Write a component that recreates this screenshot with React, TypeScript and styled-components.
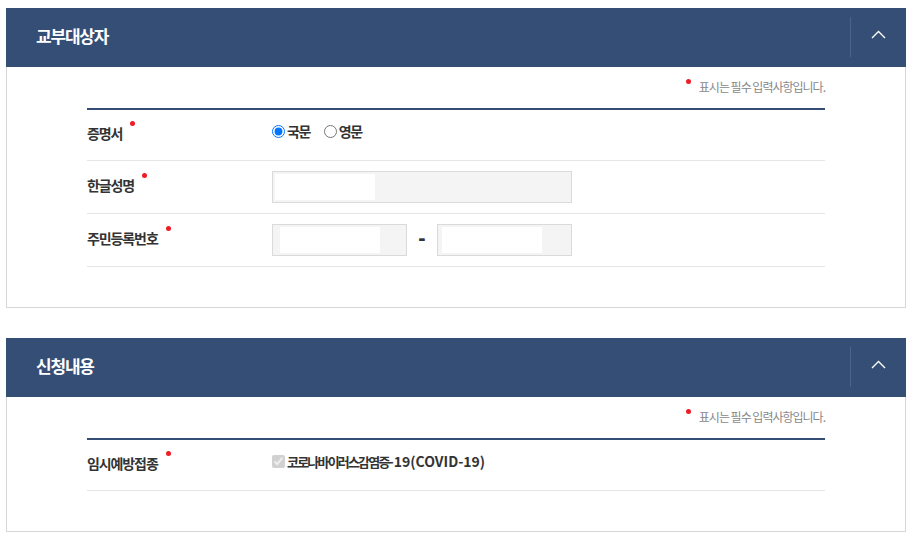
import React from 'react';
import styled, { createGlobalStyle } from 'styled-components';

const GlobalStyle = createGlobalStyle`
  html, body {
    margin: 0;
    padding: 0;
    background: #fff;
  }
  body {
    font-family: "Noto Sans CJK KR", "Noto Sans", sans-serif;
    color: #333;
  }
`;

const Page = styled.div`
  display: flex;
  flex-direction: column;
  gap: 30px;
  padding: 8px 6px;
  width: 900px;
`;

const Section = styled.section`
  display: flex;
  flex-direction: column;
`;

const Header = styled.div`
  display: flex;
  align-items: center;
  height: 59px;
  background: #354e76;
  padding-left: 30px;
`;

const Title = styled.h2`
  flex: 1;
  margin: 0 0 5px;
  font-size: 17px;
  font-weight: 700;
  letter-spacing: -1.2px;
  color: #fff;
`;

const Toggle = styled.button`
  display: flex;
  align-items: center;
  justify-content: center;
  box-sizing: border-box;
  width: 56px;
  height: 40px;
  padding: 0 0 6px;
  margin-bottom: 1px;
  background: transparent;
  border: 0;
  border-left: 1px solid #4d648a;
  cursor: pointer;
`;

const Body = styled.div`
  border: 1px solid #d6d6d6;
  border-top: 0;
  padding: 11px 80px 40px;
`;

const Note = styled.p`
  margin: 0 0 13px;
  text-align: right;
  font-size: 12px;
  line-height: 17px;
  letter-spacing: -1px;
  color: #888;
`;

const Dot = styled.span`
  display: inline-block;
  width: 5px;
  height: 5px;
  border-radius: 50%;
  background: #ee1c25;
  vertical-align: top;
  margin: ${p => (p.$note ? '1px 8px 0 0' : '-2px 0 0 8px')};
`;

const Table = styled.div`
  border-top: 2px solid #354e76;
`;

const Row = styled.div`
  display: grid;
  grid-template-columns: 185px 1fr;
  align-items: center;
  min-height: 52px;
  border-bottom: 1px solid #e6e6e6;

  &:first-child {
    min-height: 50px;
  }
`;

const Label = styled.div`
  font-size: 14px;
  font-weight: 700;
  letter-spacing: -1.1px;
  color: #333;
  padding-bottom: 4px;
`;

const Value = styled.div`
  display: flex;
  align-items: center;
`;

const Option = styled.label`
  display: flex;
  align-items: center;
  margin: 0 14px 8px 0;
  font-size: ${p => (p.$small ? 13 : 14)}px;
  font-weight: 700;
  letter-spacing: ${p => (p.$small ? -1.8 : -1.5)}px;
  color: #333;

  input {
    margin: 0 2px 0 0;
    width: 13px;
    height: 13px;
  }
`;

const Latin = styled.span`
  letter-spacing: 0;
  font-size: 14px;
`;

const Field = styled.div`
  box-sizing: border-box;
  display: flex;
  align-items: center;
  width: ${p => p.$width}px;
  height: 32px;
  padding-left: ${p => p.$inset}px;
  background: #f4f4f4;
  border: 1px solid #dadada;
`;

const Mask = styled.span`
  display: block;
  width: 100px;
  height: 26px;
  background: #fff;
`;

const Dash = styled.span`
  width: 30px;
  padding-bottom: 4px;
  text-align: center;
  font-family: "Liberation Sans", sans-serif;
  font-size: 22px;
  font-weight: 700;
  color: #333;
`;

const Chevron = () => (
  <svg width="15" height="9" viewBox="0 0 15 9">
    <polyline points="1,8 7.5,1.5 14,8" fill="none" stroke="#fff" strokeWidth="1.4" />
  </svg>
);

const Panel: React.FC<{ title: string; children: React.ReactNode }> = ({ title, children }) => (
  <Section>
    <Header>
      <Title>{title}</Title>
      <Toggle aria-label="접기">
        <Chevron />
      </Toggle>
    </Header>
    <Body>
      <Note>
        <Dot $note />
        표시는 필수 입력사항입니다.
      </Note>
      <Table>{children}</Table>
    </Body>
  </Section>
);

const App: React.FC = () => (
  <Page>
    <GlobalStyle />
    <Panel title="교부대상자">
      <Row>
        <Label>
          증명서
          <Dot />
        </Label>
        <Value>
          <Option>
            <input type="radio" name="lang" defaultChecked />
            국문
          </Option>
          <Option>
            <input type="radio" name="lang" />
            영문
          </Option>
        </Value>
      </Row>
      <Row>
        <Label>
          한글성명
          <Dot />
        </Label>
        <Value>
          <Field $width={300} $inset={2}>
            <Mask />
          </Field>
        </Value>
      </Row>
      <Row>
        <Label>
          주민등록번호
          <Dot />
        </Label>
        <Value>
          <Field $width={135} $inset={7}>
            <Mask />
          </Field>
          <Dash>-</Dash>
          <Field $width={135} $inset={4}>
            <Mask />
          </Field>
        </Value>
      </Row>
    </Panel>
    <Panel title="신청내용">
      <Row>
        <Label>
          임시예방접종
          <Dot />
        </Label>
        <Value>
          <Option $small>
            <input type="checkbox" defaultChecked disabled />
            코로나바이러스감염증<Latin>-19(COVID-19)</Latin>
          </Option>
        </Value>
      </Row>
    </Panel>
  </Page>
);

export default App;
